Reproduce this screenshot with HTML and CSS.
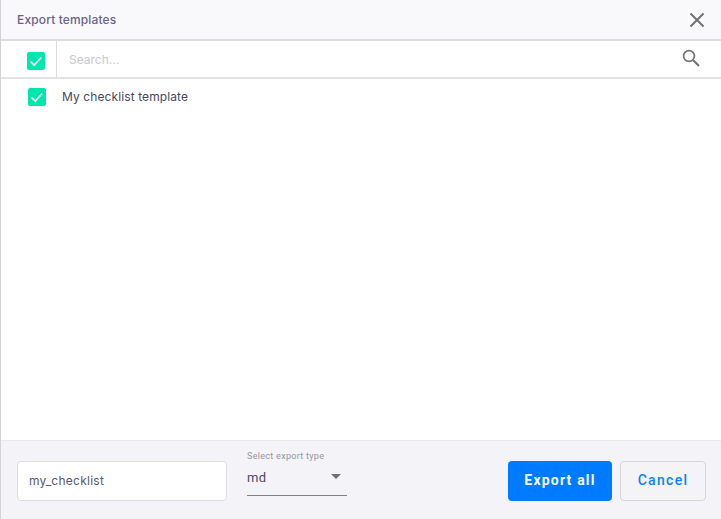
FILE: index.html
```html
<!DOCTYPE html>
<html lang="en">
<head>
<meta charset="utf-8">
<title>Export templates</title>
<link rel="stylesheet" href="styles.css">
</head>
<body>
<div class="dialog">
  <header class="head">
    <h1 class="title">Export templates</h1>
    <svg class="close" width="16" height="16" viewBox="0 0 16 16"><path d="M1.5 1.5 14.5 14.5M14.5 1.5 1.5 14.5" stroke="#6f6f6f" stroke-width="1.9" fill="none"/></svg>
  </header>
  <div class="searchbar">
    <div class="allcell">
      <svg class="check" width="18" height="18" viewBox="0 0 18 18"><rect width="18" height="18" rx="2" fill="#00e6ae"/><path d="M3.5 9.5 7.2 13 14.2 5.5" stroke="#fff" stroke-width="1.7" fill="none"/></svg>
    </div>
    <div class="search">Search...</div>
    <svg class="mag" width="18" height="18" viewBox="0 0 18 18"><circle cx="7" cy="7" r="5.4" stroke="#757575" stroke-width="1.7" fill="none"/><path d="M11 11 17 17" stroke="#757575" stroke-width="2.1" fill="none"/></svg>
  </div>
  <main class="list">
    <div class="row">
      <svg class="check" width="18" height="18" viewBox="0 0 18 18"><rect width="18" height="18" rx="2" fill="#00e6ae"/><path d="M3.5 9.5 7.2 13 14.2 5.5" stroke="#fff" stroke-width="1.7" fill="none"/></svg>
      <span class="name">My checklist template</span>
    </div>
  </main>
  <footer class="foot">
    <div class="filename">my_checklist</div>
    <div class="select">
      <div class="label">Select export type</div>
      <div class="value"><span class="type">md</span><i class="caret"></i></div>
    </div>
    <div class="actions">
      <button class="btn primary">Export all</button>
      <button class="btn ghost">Cancel</button>
    </div>
  </footer>
</div>
</body>
</html>
```
FILE: styles.css
```css
* { box-sizing: border-box; }
html, body { margin: 0; height: 100%; }
body { font-family: Inter, "Noto Sans", sans-serif; background: #fff; overflow: hidden; }
.dialog { width: 721px; height: 519px; display: flex; flex-direction: column; border-left: 1px solid #d4d4d8; }
.head { height: 41px; flex: none; display: flex; align-items: center; justify-content: space-between; padding: 0 16px; background: #f9f9fc; border-bottom: 2px solid #dedee0; }
.title { margin: 0; font-size: 12px; font-weight: 500; letter-spacing: .14px; color: #6a6389; }
.searchbar { height: 38px; flex: none; display: flex; align-items: center; border-bottom: 2px solid #e2e2e4; }
.allcell { width: 56px; height: 100%; flex: none; display: flex; align-items: center; justify-content: flex-end; padding-right: 11px; padding-top: 3px; border-right: 1px solid #dcdcdc; }
.search { flex: 1; padding-left: 12px; font-size: 12px; color: #c9c9cc; }
.mag { margin-right: 21px; margin-top: -3px; }
.list { flex: 1; padding: 9px 0 0 27px; }
.row { display: flex; align-items: center; gap: 16px; }
.name { font-size: 12px; letter-spacing: .1px; color: #4a4760; position: relative; top: -1px; }
.foot { height: 79px; flex: none; display: flex; align-items: flex-start; padding: 20px 15px 0 16px; background: #f3f3f8; border-top: 1px solid #e8e8ee; }
.filename { width: 210px; height: 40px; background: #fff; border: 1px solid #dcdce2; border-radius: 4px; padding-left: 11px; font: 12px/38px Inter, sans-serif; letter-spacing: .25px; color: #5a5770; }
.select { width: 100px; margin-left: 20px; margin-top: -10px; }
.label { font: 9px/11px Roboto, sans-serif; letter-spacing: .3px; color: #96969c; }
.value { height: 34px; display: flex; align-items: center; justify-content: space-between; padding-right: 6px; padding-bottom: 4px; border-bottom: 1px solid #807f86; font: 13px Roboto, sans-serif; letter-spacing: .4px; color: #4d4a60; }
.type { padding-top: 2px; }
.caret { width: 0; height: 0; border: 5px solid transparent; border-top: 5px solid #6f6f78; border-bottom: 0; }
.actions { margin-left: auto; display: flex; gap: 8px; }
.btn { height: 40px; padding: 0 0 2px; border-radius: 4px; font: 700 14px Roboto, sans-serif; letter-spacing: 1.2px; }
.primary { width: 104px; background: #007bff; border: 0; color: #f4f8ff; }
.ghost { width: 86px; background: #f4f4f7; border: 1px solid #d6d6da; color: #0a82ff; font-weight: 500; letter-spacing: 1.3px; }
```
